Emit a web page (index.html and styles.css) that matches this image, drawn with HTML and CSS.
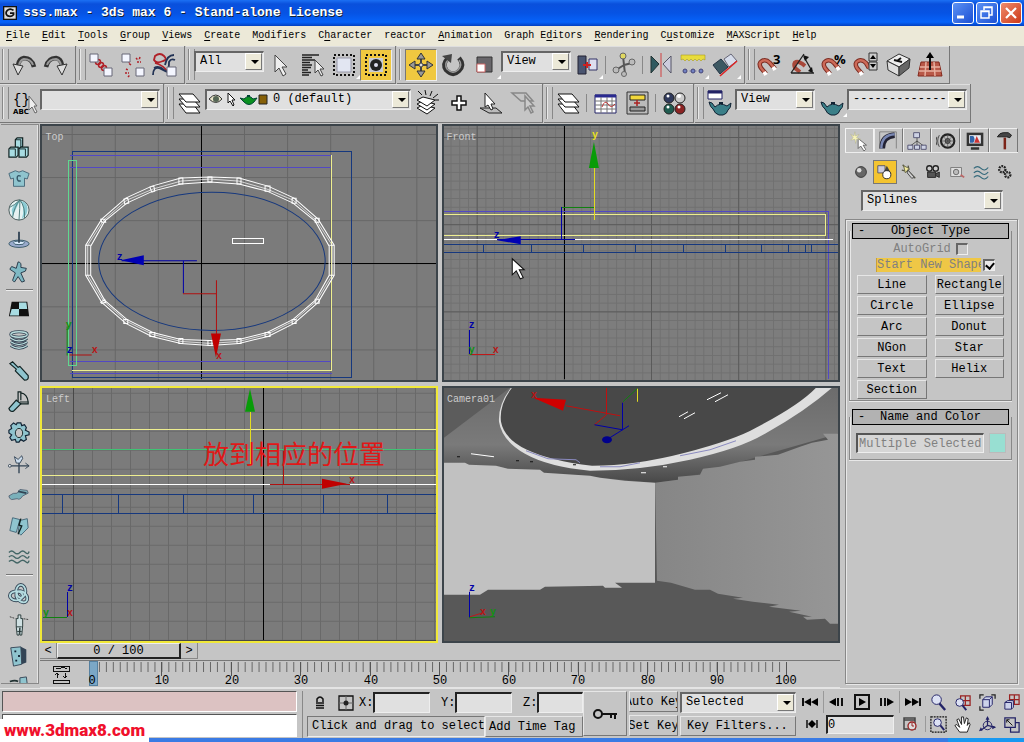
FILE: index.html
```
<!DOCTYPE html>
<html lang="en">
<head>
  <meta charset="UTF-8" />
  <meta name="viewport" content="width=device-width, initial-scale=1" />
  <title>sss.max - 3ds max 6 - Stand-alone License</title>
  <link rel="stylesheet" href="styles.css">
</head>
<body>

  <header class="titlebar">
    <svg class="app-icon" viewBox="0 0 16 16"><rect width="16" height="16" fill="#111"/><rect x="1.500" y="1.500" width="13" height="13" fill="#ddd"/><path d="M12 5Q8 2 5 5T5 11Q9 13 12 10V8H8" fill="none" stroke="#111" stroke-width="2"/></svg>
    <h1>sss.max - 3ds max 6 - Stand-alone License</h1>
    <div class="win-buttons">
      <button aria-label="Minimize"><svg viewBox="0 0 20 20"><path d="M4 14h7" stroke="#fff" stroke-width="3"/></svg></button>
      <button aria-label="Restore"><svg viewBox="0 0 20 20"><path d="M7 7V4h8v8h-3M7 4.500h8" fill="none" stroke="#fff" stroke-width="1.500"/><path d="M4 8h8v7H4zM4 8.500h8" fill="none" stroke="#fff" stroke-width="1.500"/></svg></button>
      <button class="close" aria-label="Close"><svg viewBox="0 0 20 20"><path d="M5 5l10 10M15 5L5 15" stroke="#fff" stroke-width="2.200"/></svg></button>
    </div>
  </header>

  <nav class="menubar">
    <a href="#"><u>F</u>ile</a><a href="#"><u>E</u>dit</a><a href="#"><u>T</u>ools</a><a href="#"><u>G</u>roup</a><a href="#"><u>V</u>iews</a><a href="#"><u>C</u>reate</a><a href="#">M<u>o</u>difiers</a><a href="#">C<u>h</u>aracter</a><a href="#">reactor</a><a href="#"><u>A</u>nimation</a><a href="#">Graph E<u>d</u>itors</a><a href="#"><u>R</u>endering</a><a href="#">C<u>u</u>stomize</a><a href="#"><u>M</u>AXScript</a><a href="#"><u>H</u>elp</a>
  </nav>

  <!-- main toolbar -->
  <div class="toolbar">
    <div class="group">
      <button class="tool" aria-label="Undo"><svg viewBox="0 0 28 28"><path d="M24 16Q22 7 14 7Q9 8 8 14" fill="none" stroke="#333" stroke-width="4.500"/><path d="M23 14Q21 8 14 8Q10 9 9 14" fill="none" stroke="#999" stroke-width="2"/><path d="M3 13l10 2-5 9z" fill="#ddd" stroke="#333"/></svg></button>
      <button class="tool" aria-label="Redo"><svg viewBox="0 0 28 28"><path d="M4 16Q6 7 14 7Q19 8 20 14" fill="none" stroke="#333" stroke-width="4.500"/><path d="M5 14Q7 8 14 8Q18 9 19 14" fill="none" stroke="#999" stroke-width="2"/><path d="M25 13l-10 2 5 9z" fill="#ddd" stroke="#333"/></svg></button>
    </div>
    <div class="group">
      <button class="tool" aria-label="Select and Link"><svg viewBox="0 0 28 28"><g fill="none" stroke="#b02028" stroke-width="1.500"><circle cx="11" cy="11" r="2.500"/><circle cx="14" cy="14" r="2.500"/><circle cx="17" cy="17" r="2.500"/></g><g fill="#f4f6ff" stroke="#667"><path d="M3 3h8v8H3zM17 17h8v8h-8z"/></g></svg></button>
      <button class="tool" aria-label="Unlink Selection"><svg viewBox="0 0 28 28"><path d="M12 14q-4-3 0-4M17 7l2 2M21 6l-1 3M18 11h4M7 18l2 1M6 22h4M9 26l2-2" fill="none" stroke="#b02028" stroke-width="1.500" stroke-dasharray="2 1"/><g fill="#f4f6ff" stroke="#667"><path d="M3 3h8v8H3zM17 17h8v8h-8z"/></g></svg></button>
      <button class="tool" aria-label="Bind to Space Warp"><svg viewBox="0 0 28 28"><path d="M4 5q5-4 9 0t-1 5q-7 3-9-1zM4 12q8 2 13 9" fill="none" stroke="#b02028" stroke-width="1.800"/><path d="M14 14q2-10 9-10M2 24q0-8 6-7l8 4M3 17q5-3 10 2t5-8q2-4 6-2" fill="none" stroke="#235" stroke-width="1.800"/><path d="M16 16h9v9h-9z" fill="#f4f6ff" stroke="#667"/></svg></button>
    </div>
    <div class="group">
      <span class="combo w70"><select aria-label="Selection Filter"><option>All</option></select></span>
      <button class="tool" aria-label="Select Object"><svg viewBox="0 0 28 28"><path d="M9 4v17l4-4 4 8 3-2-4-7h5z" fill="#eee" stroke="#444"/></svg></button>
      <button class="tool" aria-label="Select by Name"><svg viewBox="0 0 28 28"><path d="M4 4h17M4 6.500h10M4 9h13M4 11.500h8M4 14h10M4 16.500h9M4 19h6M4 21.500h9M4 24h7" stroke="#222" stroke-width="1.400"/><path d="M17 9v13l3-3 3 6 2-1-3-6h4z" fill="#eee" stroke="#444"/></svg></button>
      <button class="tool fly" aria-label="Rectangular Region"><svg viewBox="0 0 28 28"><path d="M4 4h20v20H4z" fill="none" stroke="#111" stroke-width="2" stroke-dasharray="2 2"/><path d="M7 7h14v14H7z" fill="#e2e6f2" stroke="#99a"/></svg></button>
      <button class="tool on" aria-label="Crossing"><svg viewBox="0 0 28 28"><path d="M4 4h20v20H4z" fill="none" stroke="#111" stroke-width="2" stroke-dasharray="2 2"/><path d="M7 7h14v14H7z" fill="#c8ccd6"/><circle cx="14" cy="14" r="6" fill="#222"/><circle cx="14" cy="14" r="2" fill="#dde"/></svg></button>
    </div>
    <div class="group">
      <button class="tool on" aria-label="Select and Move"><svg viewBox="0 0 28 28"><path d="M14 6v16M6 14h16" stroke="#444" stroke-width="2"/><path d="M14 2l4 6h-8zM14 26l4-6h-8zM2 14l6-4v8zM26 14l-6-4v8z" fill="#999" stroke="#333"/><circle cx="14" cy="14" r="2" fill="#ddd" stroke="#444"/></svg></button>
      <button class="tool" aria-label="Select and Rotate"><svg viewBox="0 0 28 28"><path d="M20 7Q26 14 20 20T7 19Q3 13 9 7" fill="none" stroke="#333" stroke-width="4.500"/><path d="M20 9Q24 14 19 19T8 18Q5 13 9 9" fill="none" stroke="#999" stroke-width="1.500"/><path d="M3 5l10-2-1 9z" fill="#444"/></svg></button>
      <button class="tool fly" aria-label="Select and Scale"><svg viewBox="0 0 28 28"><path d="M6 6h15v15H6z" fill="#68666a" stroke="#333"/><path d="M6 13h8v8H6z" fill="#fff" stroke="#c66"/></svg></button>
      <span class="combo w70"><select aria-label="Reference Coordinate System"><option>View</option></select></span>
      <button class="tool fly" aria-label="Use Pivot Point Center"><svg viewBox="0 0 28 28"><path d="M5 5h8v18H5z" fill="#4a5570" stroke="#223"/><path d="M16 8h8v11h-8z" fill="#dde" stroke="#336"/><path d="M10 14h8M14 11v6" stroke="#c22" stroke-width="2"/></svg></button>
      <i class="sep"></i>
      <button class="tool" aria-label="Select and Manipulate"><svg viewBox="0 0 28 28"><path d="M14 14l-1-9M14 14l8-2M14 14L6 19M14 14l1 9" stroke="#555" stroke-width="2"/><g stroke="#666" fill="#bbb"><circle cx="13" cy="5" r="3" fill="#e0d860"/><circle cx="22" cy="11" r="3"/><circle cx="6" cy="19" r="3"/><circle cx="14" cy="23" r="2.500"/></g></svg></button>
      <i class="sep"></i>
      <button class="tool" aria-label="Mirror"><svg viewBox="0 0 28 28"><path d="M4 5v17l8-9z" fill="#2f5a60" stroke="#233"/><path d="M24 5v17l-8-9z" fill="#ccd" stroke="#556"/><path d="M14 2v24" stroke="#d04040"/></svg></button>
      <button class="tool fly" aria-label="Align"><svg viewBox="0 0 28 28"><path d="M2 4h24v5l-2-1-2 2-2-2-2 2-2-2-2 2-2-2-2 2-2-2-2 2-2-2-2 1z" fill="#e8dc3c" stroke="#a99c20" stroke-width=".6"/><path d="M5 20h18" stroke="#99b" stroke-dasharray="3 2"/><g fill="#7080c0" stroke="#447"><circle cx="6" cy="20" r="2"/><circle cx="14" cy="20" r="2"/><circle cx="22" cy="20" r="2"/></g></svg></button>
      <button class="tool fly" aria-label="Layer Align"><svg viewBox="0 0 28 28"><path d="M2 14l8-6 7 8-8 7z" fill="#3c5862" stroke="#234"/><path d="M13 8l7-5 6 7-8 6z" fill="#d6dcea" stroke="#667"/><path d="M9 25L26 10" stroke="#d22" stroke-width="1.500"/></svg></button>
    </div>
    <div class="group">
      <button class="tool" aria-label="Snap Toggle"><svg viewBox="0 0 28 28"><path d="M10 23L5 17Q2 12 6 10t8 2l5 6" fill="none" stroke="#7c2c22" stroke-width="4.500"/><path d="M10 23L5 17Q2 12 6 10t8 2l5 6" fill="none" stroke="#cc6a58" stroke-width="2.500"/><path d="M8 21l2 3M17 16l2 3" stroke="#fff" stroke-width="4"/><text x="17" y="13" class="glyph">3</text></svg></button>
      <button class="tool" aria-label="Angle Snap"><svg viewBox="0 0 28 28"><path d="M12 21l-5-4Q5 12 8 11t9 4" fill="none" stroke="#a8483a" stroke-width="4"/><path d="M3 22h23M3 22L16 3M16 6l8 14" fill="none" stroke="#222" stroke-width="1.300"/><path d="M15 4l6 2-4 4zM25 22l-5-2 4-4z" fill="#111"/></svg></button>
      <button class="tool" aria-label="Percent Snap"><svg viewBox="0 0 28 28"><path d="M10 23L5 17Q2 12 6 10t8 2l5 6" fill="none" stroke="#7c2c22" stroke-width="4.500"/><path d="M10 23L5 17Q2 12 6 10t8 2l5 6" fill="none" stroke="#cc6a58" stroke-width="2.500"/><path d="M8 21l2 3M17 16l2 3" stroke="#fff" stroke-width="4"/><text x="14" y="13" class="glyph">%</text></svg></button>
      <button class="tool" aria-label="Spinner Snap"><svg viewBox="0 0 28 28"><path d="M10 23L5 17Q2 12 6 10t8 2l3 5" fill="none" stroke="#7c2c22" stroke-width="4.500"/><path d="M10 23L5 17Q2 12 6 10t8 2l3 5" fill="none" stroke="#cc6a58" stroke-width="2.500"/><path d="M8 21l2 3" stroke="#fff" stroke-width="4"/><path d="M17 2h8v8h-8zM17 11h8v8h-8z" fill="#ccc" stroke="#333"/><path d="M21 4l3 4h-6zM21 17l3-4h-6z"/></svg></button>
      <button class="tool" aria-label="Named Selection Sets"><svg viewBox="0 0 28 28"><path d="M3 10l12-7 11 5-11 8z" fill="#eee" stroke="#333"/><path d="M3 10l12 6v9L4 19z" fill="#ddd" stroke="#333"/><path d="M15 16l11-8-1 9-10 8z" fill="#666" stroke="#333"/><path d="M10 9l8 2M13 10l4-3" stroke="#111" stroke-width="2"/></svg></button>
      <button class="tool" aria-label="Grid Snap"><svg viewBox="0 0 28 28"><path d="M5 11h18l3 14H2z" fill="#b85848" stroke="#84281c"/><path d="M4 16h20M3 20h22M10 11l-1 14M18 11l1 14" stroke="#e8b0a0" stroke-width="1.500"/><path d="M14 19V6" stroke="#111" stroke-width="2"/><path d="M14 1l4 6h-8z"/></svg></button>
    </div>
  </div>

  <div class="toolbar second">
    <div class="group">
      <button class="tool" aria-label="Edit Named Selections"><svg viewBox="0 0 28 28"><text x="3" y="15" class="braces">{}</text><text x="3" y="25" class="tiny">ABC</text><path d="M19 7v14l3-3 3 6 2-1-3-6h3z" fill="#eee" stroke="#666"/></svg></button>
      <span class="combo w120"><select aria-label="Named Selection Sets"><option></option></select></span>
    </div>
    <div class="group">
      <button class="tool" aria-label="Layer Manager"><svg viewBox="0 0 28 28"><g fill="#fff" stroke="#111"><path d="M4 15h14l7 9H11z"/><path d="M4 10h14l7 8H11z"/><path d="M4 5h14l7 8H11z"/></g></svg></button>
      <span class="combo w206 layers">
        <select aria-label="Layer"><option>0 (default)</option></select>
        <svg viewBox="0 0 60 16"><path d="M1 8q7-8 13 0q-6 7-13 0z" fill="#e8e4c8" stroke="#333"/><circle cx="8" cy="8" r="3" fill="#565"/><path d="M20 2v10l2-2 3 5 1-1-2-5h3z" fill="#fff" stroke="#111"/><path d="M32 7l4 1q5-5 9 0l4-1-3 4q-5 5-10 0z" fill="#0a9020" stroke="#043"/><path d="M39 5h3" stroke="#043" stroke-width="2"/><path d="M51 4h8v9h-8z" fill="#866008" stroke="#222"/></svg>
      </span>
      <button class="tool" aria-label="Create New Layer"><svg viewBox="0 0 28 28"><g fill="#fff" stroke="#111"><path d="M4 19l6-3 12 3-8 6z"/><path d="M4 15l6-3 12 3-8 6z"/><path d="M4 11l6-3 12 3-8 6z"/></g><path d="M5 2l4 4M12 1l1 5M19 2l-2 5M25 5l-5 4M26 11h-4" stroke="#111"/></svg></button>
      <button class="tool" aria-label="Add Selection to Layer"><svg viewBox="0 0 28 28"><path d="M12 7h4v5h5v4h-5v5h-4v-5H7v-4h5z" fill="#fff" stroke="#111" stroke-width="1.500"/></svg></button>
      <button class="tool" aria-label="Select Objects in Layer"><svg viewBox="0 0 28 28"><path d="M3 19h16l6 5H12z" fill="#bbb" stroke="#222"/><path d="M8 4v14l3-2 3 5 2-1-2-5h4z" fill="#fff" stroke="#222"/></svg></button>
      <button class="tool" aria-label="Set Current Layer"><svg viewBox="0 0 28 28"><path d="M3 4h14l7 8H12z" fill="none" stroke="#888" stroke-width="1.500"/><path d="M16 7v14l3-3 3 6 2-1-3-6h4z" fill="#ccc" stroke="#888" stroke-width="1.500"/></svg></button>
    </div>
    <div class="group">
      <button class="tool" aria-label="Layers"><svg viewBox="0 0 28 28"><g fill="#fff" stroke="#111"><path d="M4 15h14l7 9H11z"/><path d="M4 10h14l7 8H11z"/><path d="M4 5h14l7 8H11z"/></g></svg></button>
      <i class="sep"></i>
      <button class="tool" aria-label="Curve Editor"><svg viewBox="0 0 28 28"><path d="M4 6h21v18H4z" fill="#fff" stroke="#226"/><path d="M4 7h21" stroke="#2a2a90" stroke-width="3"/><path d="M4 12h21M4 16h21M4 20h21M10 8v16M16 8v16M21 8v16" stroke="#777"/><path d="M11 18q3-8 6-3t7 0" fill="none" stroke="#b33"/></svg></button>
      <button class="tool" aria-label="Schematic View"><svg viewBox="0 0 28 28"><path d="M4 3h21v22H4z" fill="#bbb" stroke="#333"/><path d="M7 6h15v5H7z" fill="#f2d83c" stroke="#222"/><path d="M7 18h15v4H7z" fill="#999" stroke="#222"/><path d="M14 11v6M11 14h6" stroke="#a22" stroke-width="1.500"/></svg></button>
      <i class="sep"></i>
      <button class="tool" aria-label="Material Editor"><svg viewBox="0 0 28 28"><g stroke="#222"><circle cx="9" cy="9" r="5" fill="#303a5c"/><circle cx="20" cy="9" r="5" fill="#ccc"/><circle cx="9" cy="20" r="5" fill="#1f5c50"/><circle cx="20" cy="20" r="5" fill="#8c2424"/></g><g fill="#fff"><circle cx="8" cy="7" r="1.500"/><circle cx="19" cy="7" r="2"/><circle cx="8" cy="18" r="1.500"/><circle cx="19" cy="18" r="1.500"/></g></svg></button>
    </div>
    <div class="group">
      <button class="tool" aria-label="Render Scene"><svg viewBox="0 0 28 28"><path d="M3 2h14v8H3z" fill="#fff" stroke="#226"/><path d="M3 3h14" stroke="#226" stroke-width="3"/><path d="M4 13l3 1 3 4q5-5 12-1l4-3q0 5-3 7-1 4-5 5h-4q-4-1-6-6-3-2-4-7z" fill="#3b7f88" stroke="#123"/><path d="M14 14h4" stroke="#123" stroke-width="2"/></svg></button>
      <span class="combo w80"><select aria-label="Render Type"><option>View</option></select></span>
      <button class="tool fly" aria-label="Quick Render"><svg viewBox="0 0 28 28"><path d="M4 13l3 1 3 4q5-5 12-1l4-3q0 5-3 7-1 4-5 5h-4q-4-1-6-6-3-2-4-7z" fill="#3b7f88" stroke="#123"/><path d="M14 14h4" stroke="#123" stroke-width="2"/></svg></button>
      <span class="combo w120"><select aria-label="Preset"><option>-------------</option></select></span>
    </div>
  </div>

  <main class="workspace">
    <!-- reactor toolbar -->
    <aside class="reactor">
      <button aria-label="Rigid Body"><svg viewBox="0 0 24 24"><g fill="#a8dce2" stroke="#122" stroke-width="1.300"><path d="M8 3l2-2h6v9l-2 2H8z"/><path d="M1 13l2-2h8v9l-2 2H1z"/><path d="M12 13l2-2h8v9l-2 2h-8z"/></g><path d="M8 3h6v8M2 13h6v8M13 13h6v8" fill="none" stroke="#122"/></svg></button>
      <button aria-label="Cloth"><svg viewBox="0 0 24 24"><path d="M1 6l7-3q4 3 8 0l7 3-2 6-3-1v9H6v-9l-3 1z" fill="#8fc4ce" stroke="#467"/><path d="M14 9q-4-2-4 2t4 3" fill="none" stroke="#356" stroke-width="1.500"/></svg></button>
      <button aria-label="Soft Body"><svg viewBox="0 0 24 24"><circle cx="12" cy="12" r="11" fill="#e6f2f2" stroke="#455"/><path d="M14 2q5 8 1 20l5-5q3-8-1-13z" fill="#8ccbd4"/><path d="M4 12q3-8 9-10-5 10-8 17z" fill="#8ccbd4"/><path d="M2 9q5-2 11-8M5 20q2-12 8-19M12 23q1-14 1-22M18 21q1-12-5-20" fill="none" stroke="#477"/></svg></button>
      <button aria-label="Rope"><svg viewBox="0 0 24 24"><ellipse cx="12" cy="15" rx="11" ry="4" fill="#9ac" stroke="#356"/><ellipse cx="12" cy="14" rx="6" ry="2" fill="#def" stroke="#356"/><path d="M12 2v12" stroke="#345" stroke-width="2"/></svg></button>
      <button aria-label="Deforming Mesh"><svg viewBox="0 0 24 24"><path d="M11 1q4 0 3 6l6 1-1 3-5 2 4 9-3 1-4-6-4 6-2-2 3-8-6-4 2-3 5 2z" fill="#7fb9c4" stroke="#234"/></svg></button>
      <hr>
      <button aria-label="Plane"><svg viewBox="0 0 24 24"><path d="M4 4h17l2 16H1z" fill="#111"/><path d="M12 5h8l1 7h-9zM4 12h8v7H2z" fill="#a8dce2"/></svg></button>
      <button aria-label="Spring"><svg viewBox="0 0 24 24"><g fill="none" stroke="#345" stroke-width="3.200"><ellipse cx="12" cy="6" rx="9" ry="3"/><path d="M3 10q9 6 18 0M3 14q9 6 18 0M3 18q9 6 18 0"/></g><g fill="none" stroke="#bdd" stroke-width="1.400"><ellipse cx="12" cy="6" rx="9" ry="3"/><path d="M3 10q9 6 18 0M3 14q9 6 18 0M3 18q9 6 18 0"/></g></svg></button>
      <button aria-label="Linear Dashpot"><svg viewBox="0 0 24 24"><path d="M2 4l3-2 6 6 2-1 9 10q1 5-4 5L8 12l1-2z" fill="#8fc4ce" stroke="#122" stroke-width="1.300"/></svg></button>
      <button aria-label="Angular Dashpot"><svg viewBox="0 0 24 24"><path d="M1 19l8-9 5 4-8 8q-4 1-5-3z" fill="#8fc4ce" stroke="#122" stroke-width="1.300"/><path d="M11 11V1h3v9M13 12h9v2h-9M14 2q7 1 8 10" fill="none" stroke="#122" stroke-width="1.300"/></svg></button>
      <button aria-label="Motor"><svg viewBox="0 0 24 24"><path d="M10 1h4l1 3 3-1 2 3-1 3 4 2v3l-4 1 1 4-3 2-3-2-2 3h-3l-1-3-4 1-2-3 2-3-3-2v-3l3-2-1-3 3-3 3 2z" fill="#8fc4ce" stroke="#123" stroke-width="1.300"/><ellipse cx="12" cy="12" rx="4" ry="5" fill="#c5c5c5" stroke="#122"/></svg></button>
      <button aria-label="Wind"><svg viewBox="0 0 24 24"><path d="M1 14h22M12 9v13" stroke="#345" stroke-width="1.500"/><path d="M7 4l4 3 4-4 1 3-3 5H9z" fill="#cde" stroke="#345"/><circle cx="2" cy="14" r="1.500" fill="#fff" stroke="#345"/><path d="M19 11l4 3-4 3" fill="none" stroke="#345"/></svg></button>
      <button aria-label="Toy Car"><svg viewBox="0 0 24 24"><path d="M1 13q5-4 9-3l3-4 8 1 1 3-6 3q-3 5-6 3l-6 1q-3-1-3-4z" fill="#7ab0ba" stroke="#567"/><path d="M11 8l9 2" stroke="#345" stroke-width="2"/></svg></button>
      <button aria-label="Fracture"><svg viewBox="0 0 24 24"><path d="M5 3l8 2-4 14-7-2zM13 6l8-2 1 10-8 8-3-3z" fill="#8fc4ce" stroke="#467"/><path d="M14 4l-2 7 3 1-4 9" fill="none" stroke="#122" stroke-width="1.500"/></svg></button>
      <button aria-label="Water"><svg viewBox="0 0 24 24"><path d="M1 7q3-3 6 0t6 0 6 0 4-1M1 12q3-3 6 0t6 0 6 0 4-1M1 17q3-3 6 0t6 0 6 0 4-1" fill="none" stroke="#466" stroke-width="1.500"/></svg></button>
      <hr>
      <button aria-label="Constraint Solver"><svg viewBox="0 0 24 24"><g fill="none" stroke="#345" stroke-width="4"><ellipse cx="9" cy="14" rx="7" ry="5"/><ellipse cx="14" cy="9" rx="5" ry="7"/><ellipse cx="15" cy="15" rx="7" ry="5" transform="rotate(45 15 15)"/></g><g fill="none" stroke="#b5dce0" stroke-width="2"><ellipse cx="9" cy="14" rx="7" ry="5"/><ellipse cx="14" cy="9" rx="5" ry="7"/><ellipse cx="15" cy="15" rx="7" ry="5" transform="rotate(45 15 15)"/></g></svg></button>
      <button aria-label="Rag Doll"><svg viewBox="0 0 24 24"><path d="M2 3l6 2M22 6l-6-1" stroke="#333" stroke-dasharray="2 1"/><path d="M11 1h3v4h2v8l-1 10h-2v-8l-1 8h-2l-1-9V5h2z" fill="#cfe0e2" stroke="#233"/><path d="M9 14h6M10 19h5" stroke="#233"/></svg></button>
      <button aria-label="Hinge"><svg viewBox="0 0 24 24"><path d="M3 3l11-1 1 19-9 2z" fill="#8fc4ce" stroke="#345"/><path d="M14 2l6 3v14l-5 2z" fill="#345"/><path d="M7 7h2M11 12h2M8 17h2" stroke="#123" stroke-width="2"/></svg></button>
      <button aria-label="Point-Point"><svg viewBox="0 0 24 24"><path d="M13 2l7-1 1 8h-8z" fill="#8fc4ce" stroke="#345"/><path d="M2 6q6-2 9 0" fill="none" stroke="#233" stroke-width="2"/></svg></button>
    </aside>

    <section class="stage">
      <div class="viewports">
        <!-- Top -->
        <svg class="view" viewBox="42 126 394 253" preserveAspectRatio="xMidYMid slice">
          <defs>
            <pattern id="gridTop" x="72" y="134" width="43" height="43" patternUnits="userSpaceOnUse"><path d="M.5 0v43M0 .5h43" stroke="#666" fill="none"/></pattern>
          </defs>
          <rect x="0" y="0" width="900" height="742" fill="#7b7b7b"/>
          <rect x="0" y="0" width="900" height="742" fill="url(#gridTop)"/>
          <g fill="none" shape-rendering="crispEdges">
            <path d="M201.500 126v253M42 263.500h394" stroke="#000"/>
            <path d="M72.500 151.500h279v226h-279z" stroke="#16387e"/>
            <path d="M70 155.500h262M70 167.500h262M70 361.500h262M70 373.500h262" stroke="#5248c4"/>
            <path d="M331.500 155v216M72 370.500h260" stroke="#eeee90"/>
            <path d="M68.500 160.500h8v205h-8z" stroke="#5fd890"/>
            <path d="M232.500 238.500h31v5h-31z" stroke="#fff"/>
          </g>
          <ellipse cx="212" cy="261" rx="113" ry="69" fill="none" stroke="#16387e"/>
          <g fill="none" stroke="#fff">
            <path d="M210 177L181 178 152 186 126 198 102 219 86 245V275L102 302 126 323 152 336 181 343 210 345 239 343 268 336 294 323 318 302 334 275V245L318 219 294 198 268 186 239 178z"/>
            <path d="M210 182L181 184 153 191 127 203 105 221 91 246V275L105 300 127 319 153 332 181 339 210 340 239 339 267 332 293 319 315 300 329 275V246L315 221 293 203 267 191 239 184z"/>
            <path d="M210 179L181 181 153 189 127 200 104 220 88 245V275L104 301 127 321 153 334 181 341 210 343 239 341 267 334 293 321 316 301 332 275V245L316 220 293 200 267 189 239 181z" stroke-width=".7"/>
            <path d="M208 177h4v5h-4zM179 178h4v6h-4zM150 187l4-1 1 5-3 1zM124 199l4-1 1 5-4 1zM101 219l4 0 1 3-4 0zM86 245h5M86 275h5M101 302l4-3 1 3-4 1zM124 319l4 0 0 4-4 0zM150 332h5v4h-5zM179 338h4v5h-4zM208 340h4v5h-4zM237 338h4v5h-4zM265 332h5v4h-5zM292 319h4v4h-4zM315 299h4v4h-4zM329 275h5M329 245h5M315 218h4v4h-4zM292 198h4v5h-4zM265 186h5v5h-5zM237 178h4v6h-4z"/>
          </g>
          <path d="M122 260.500h75M183.500 261v32" stroke="#0000a8"/><path d="M121 260l23-5v10z" fill="#0000b4"/>
          <path d="M183 293.500h33M216.500 280v60M70 354.500h22" stroke="#b01010"/><path d="M211 333h10l-5 24z" fill="#c00000"/>
          <path d="M67.500 326v29" stroke="#109010"/>
          <text class="axis z" x="117" y="260">z</text><text class="axis x" x="216" y="359">x</text>
          <text class="axis y" x="66" y="328">y</text><text class="axis z" x="67" y="353">z</text><text class="axis x" x="92" y="353">x</text>
          <text class="label" x="46" y="140">Top</text>
        </svg>

        <!-- Front -->
        <svg class="view" viewBox="444 126 394 253" preserveAspectRatio="xMidYMid slice">
          <defs>
            <pattern id="fine" x="564" y="137" width="8.700" height="8.700" patternUnits="userSpaceOnUse"><path d="M.5 0v9M0 .5h9" stroke="#707070" fill="none"/></pattern>
            <pattern id="major" x="477" y="137" width="87" height="87" patternUnits="userSpaceOnUse"><path d="M.5 0v87M0 .5h87" stroke="#5a5a5a" fill="none"/></pattern>
          </defs>
          <rect x="0" y="0" width="900" height="742" fill="#7d7d7d"/>
          <rect x="0" y="0" width="900" height="742" fill="url(#fine)"/>
          <rect x="0" y="0" width="900" height="742" fill="url(#major)"/>
          <g fill="none" shape-rendering="crispEdges">
            <path d="M564.500 126v253" stroke="#000"/>
            <path d="M444 211.500h384V379" stroke="#5248c4"/>
            <path d="M444 214.500h381v21H444" stroke="#eeee90"/>
            <path d="M444 239.500h389" stroke="#fff"/>
            <path d="M444 244.500h394M444 252.500h394M483.500 245v7M531.500 245v7M583.500 245v7M635.500 245v7M683.500 245v7M725.500 245v7M761.500 245v7M788.500 245v7M805.500 245v7M811.500 245v7" stroke="#16387e"/>
            <path d="M561.500 207v32M497 239.500h78M469.500 330v24" stroke="#0000a8"/>
            <path d="M562 207.500h33" stroke="#108010"/>
            <path d="M594.500 167v53" stroke="#e4dc20"/>
            <path d="M470 354.500h25" stroke="#c01818"/>
          </g>
          <path d="M594 142l5 26h-10z" fill="#089c08"/><path d="M497 240l24-4v8z" fill="#0000b4"/>
          <text class="axis yellow" x="592" y="138">y</text><text class="axis z" x="494" y="238">z</text>
          <text class="axis z" x="469" y="328">z</text><text class="axis y" x="469" y="353">y</text><text class="axis x" x="493" y="353">x</text>
          <path d="M512.500 258.500v16l4-4 4 8 3-1-4-8h5z" fill="#fff" stroke="#111"/>
          <text class="label" x="447" y="140">Front</text>
        </svg>

        <!-- Left, the active view -->
        <svg class="view active" viewBox="42 387 394 254" preserveAspectRatio="xMidYMid slice">
          <defs>
            <pattern id="gridLeft" x="73" y="392" width="19" height="19" patternUnits="userSpaceOnUse"><path d="M.5 0v19M0 .5h19" stroke="#696969" fill="none"/></pattern>
          </defs>
          <rect x="0" y="0" width="900" height="742" fill="#7b7b7b"/>
          <rect x="0" y="0" width="900" height="742" fill="url(#gridLeft)"/>
          <g fill="none" shape-rendering="crispEdges">
            <path d="M263.500 387v254" stroke="#000"/><path d="M73.500 387v254M42 639.500h394" stroke="#484848"/>
            <path d="M42 428.500h394M42 474.500h394" stroke="#eeee90"/>
            <path d="M42 448.500h394" stroke="#3fc474"/>
            <path d="M42 483.500h394" stroke="#fff"/>
            <path d="M42 493.500h394M42 512.500h394M62.500 494v18M118.500 494v18M183.500 494v18M253.500 494v18M323.500 494v18M387.500 494v18" stroke="#16387e"/>
            <path d="M250.500 411v54" stroke="#e4dc20"/>
            <path d="M270 483.500h80M283.500 450v33" stroke="#b01010"/>
            <path d="M67.500 591v25" stroke="#0000a8"/><path d="M43 616.500h24" stroke="#108010"/>
          </g>
          <path d="M250 388l5 23h-10z" fill="#089c08"/><path d="M347 483l-25 5v-10z" fill="#c00000"/>
          <text class="axis x" x="349" y="482">x</text>
          <text class="axis z" x="67" y="590">z</text><text class="axis y" x="43" y="615">y</text><text class="axis x" x="67" y="615">x</text>
          <text class="label" x="46" y="401">Left</text>
          <text class="caption" x="203" y="463">放到相应的位置</text>
        </svg>

        <!-- Camera01 -->
        <svg class="view" viewBox="444 387 394 254" preserveAspectRatio="xMidYMid slice">
          <defs>
            <linearGradient id="ceil" x1="0" y1="0" x2="0" y2="1"><stop offset="0" stop-color="#6c6c6c"/><stop offset=".6" stop-color="#7a7a7a"/><stop offset="1" stop-color="#484848"/></linearGradient>
            <linearGradient id="wall" x1="0" y1="0" x2="1" y2="0"><stop offset="0" stop-color="#868686"/><stop offset="1" stop-color="#969696"/></linearGradient>
          </defs>
          <rect x="0" y="0" width="900" height="742" fill="#585858"/>
          <path d="M444 387h394v46l-160 46-23 3-211-20z" fill="url(#ceil)"/>
          <path d="M444 387h66l-66 50z" fill="#5c5c5c"/>
          <path d="M444 462h21l4 2 27 1 12 3 32 1 4 3 46 3 10 2 25 3 30 2v100h-40l7 5h-17l-2-2-58 1-5 3h-52l-8 5h-36z" fill="#c1c1c1"/>
          <path d="M655 482l23-3 0-3 22-2 3-6 17-2 20-5 15-2 0-3 23-2 22-8 12-4 16-3-5-6h15v190h-8l-5-5-18 1-4-3 9 0-23-5 12-1-32-4 10-2-26-3-20-3 10-1-25-4-8-4h-15l-24-7-14-2z" fill="url(#wall)"/>
          <path d="M511 387Q498 404 499 421 502 440 525 453T590 470Q640 470 690 459T765 433Q806 410 832 387z" fill="#dedede"/>
          <path d="M512 387Q499 404 501 421 504 438 527 449T592 465Q635 465 685 452T756 427Q800 404 816 387z" fill="#484848"/>
          <path d="M526 450l22 8 28 1 4 3M600 466h20l20-4M680 455l30-6 26-9" fill="none" stroke="#8a8ac0"/>
          <path d="M707 399l14-7M715 401l13-7M679 416l9-5M684 418l11-6M471 453l23 3M641 472h5M663 466h4" stroke="#fff"/>
          <path d="M457 456h3M516 460h3M530 461h3M573 464h3" stroke="#111"/>
          <path d="M606.500 387v27l-12 10M566 405l54 10" fill="none" stroke="#c01010"/><path d="M533 397l33 2-3 11z" fill="#d00000"/>
          <path d="M622.500 402v27l-28-5M629 425l-24 15M469.500 591v26" fill="none" stroke="#0000a8"/><ellipse cx="607" cy="439" rx="5" ry="3.500" fill="#00008c"/>
          <path d="M623 401l14-13M469 617l26-1" stroke="#108010"/><path d="M637.500 388v13" stroke="#e4dc20"/>
          <path d="M470 616l13-4" stroke="#c01818"/>
          <text class="axis x" x="531" y="397">x</text><text class="axis z" x="469" y="590">z</text><text class="axis x" x="480" y="614">x</text><text class="axis y" x="490" y="614">y</text>
          <text class="label" x="447" y="401">Camera01</text>
        </svg>
      </div>

      <div class="timeslider">
        <button aria-label="Previous Frame">&lt;</button><button class="thumb">0 / 100</button><button aria-label="Next Frame">&gt;</button>
      </div>
      <div class="trackbar">
        <svg viewBox="40 662 800 25" preserveAspectRatio="xMinYMid meet">
          <defs><pattern id="ticks" x="92" y="662" width="6.940" height="10" patternUnits="userSpaceOnUse"><path d="M.5 0v10" stroke="#666"/></pattern></defs>
          <path d="M53 667h16v5H53zM53 681h16v3H53zM56 669l3 1 4-2 4 2" fill="none" stroke="#111"/><path d="M57 679v-5M55 676l2-2 2 2M65 674v5M63 677l2 2 2-2" fill="none" stroke="#111"/>
          <rect x="92" y="663" width="696" height="10" fill="url(#ticks)"/>
          <path d="M161.500 663v14M231.500 663v14M300.500 663v14M370.500 663v14M439.500 663v14M508.500 663v14M578.500 663v14M647.500 663v14M717.500 663v14M786.500 663v14" stroke="#555"/>
          <path d="M89 662h8v24h-8z" fill="#7ba7c6" stroke="#5580a0"/>
          <g class="nums"><text x="92" y="685">0</text><text x="162" y="685">10</text><text x="232" y="685">20</text><text x="301" y="685">30</text><text x="371" y="685">40</text><text x="440" y="685">50</text><text x="509" y="685">60</text><text x="578" y="685">70</text><text x="648" y="685">80</text><text x="717" y="685">90</text><text x="786" y="685">100</text></g>
        </svg>
      </div>
    </section>

    <aside class="panel">
      <div class="tabs">
        <button class="current" aria-label="Create"><svg viewBox="0 0 24 24"><path d="M11 9v12l3-3 4 6 2-2-3-5h4z" fill="#fff" stroke="#555"/><path d="M7 1l1 5 4-2-3 4 5 2-5 0-1 5-1-5-5 1 3-3-3-4 4 2z" fill="#f8f4b8" stroke="#aa8" stroke-width=".5"/></svg></button>
        <button aria-label="Modify"><svg viewBox="0 0 24 24"><path d="M5 21Q5 6 20 5" fill="none" stroke="#223" stroke-width="7"/><path d="M4 21Q4 5 20 4" fill="none" stroke="#7a88b4" stroke-width="3"/><path d="M2 1h20v20M2 1v20" fill="none" stroke="#666" stroke-width=".8"/></svg></button>
        <button aria-label="Hierarchy"><svg viewBox="0 0 24 24"><path d="M12 8v5M4 18l8-6 8 6M12 12v5" fill="none" stroke="#444"/><path d="M8 2h7v6H8zM1 17h6v5H1zM9 17h6v5H9zM17 17h6v5h-6z" fill="#cdd2e4" stroke="#446"/></svg></button>
        <button aria-label="Motion"><svg viewBox="0 0 24 24"><circle cx="14" cy="12" r="8" fill="#bbb" stroke="#222" stroke-width="2.500"/><circle cx="14" cy="12" r="3" fill="#777" stroke="#222"/><path d="M14 4v16M6 12h16M8 6l12 12M20 6L8 18" stroke="#444" stroke-width=".7"/><path d="M4 5q-4 7 0 14M1 7q-2 5 0 10" fill="none" stroke="#333"/></svg></button>
        <button aria-label="Display"><svg viewBox="0 0 24 24"><path d="M2 2h20v16H2z" fill="#333"/><path d="M5 5h14v10H5z" fill="#e8ecf4"/><path d="M6 6h4q3 4 0 8H6z" fill="#36a"/><path d="M14 6l4 8h-7z" fill="#c33"/><path d="M7 21h10" stroke="#333" stroke-width="3"/></svg></button>
        <button aria-label="Utilities"><svg viewBox="0 0 24 24"><path d="M4 7q3-5 7-5h6l4 3-2 3-4-1H9z" fill="#444" stroke="#111"/><path d="M13 8v14" stroke="#7c2418" stroke-width="3"/></svg></button>
      </div>
      <div class="cats">
        <button aria-label="Geometry"><svg viewBox="0 0 20 20"><circle cx="10" cy="10" r="6" fill="#666" stroke="#333"/><circle cx="8" cy="8" r="2.500" fill="#ddd"/></svg></button>
        <button class="on" aria-label="Shapes"><svg viewBox="0 0 20 20"><path d="M2 3h8v8H2z" fill="#ccd" stroke="#556"/><path d="M12 3l5 9H8z" fill="#444"/><circle cx="12" cy="13" r="4.500" fill="#fff" stroke="#222"/></svg></button>
        <button aria-label="Lights"><svg viewBox="0 0 20 20"><path d="M3 2l5 6 9 9M2 8l5 1M9 3l1 5" stroke="#554" stroke-width="1.500"/><path d="M4 3l6 3-4 5z" fill="#f4eca0" stroke="#664"/><path d="M9 8l7 8-3 1-5-6z" fill="#ccc" stroke="#444"/></svg></button>
        <button aria-label="Cameras"><svg viewBox="0 0 20 20"><circle cx="6" cy="6" r="3" fill="#ccc" stroke="#222" stroke-width="1.500"/><circle cx="13" cy="6" r="3" fill="#ccc" stroke="#222" stroke-width="1.500"/><path d="M4 10h9v6H4zM13 12l4-2v6l-4-2" fill="#555" stroke="#222"/></svg></button>
        <button aria-label="Helpers"><svg viewBox="0 0 20 20"><path d="M3 5h12v10H3z" fill="#ddd" stroke="#777"/><circle cx="9" cy="10" r="3" fill="#bbb" stroke="#666"/><path d="M14 13l4 3" stroke="#b66" stroke-width="2"/></svg></button>
        <button aria-label="Space Warps"><svg viewBox="0 0 20 20"><path d="M2 6q4-4 8 0t8-1M2 11q4-4 8 0t8-1M2 16q4-4 8 0t8-1" fill="none" stroke="#356a7c" stroke-width="1.300"/></svg></button>
        <button aria-label="Systems"><svg viewBox="0 0 20 20"><circle cx="7" cy="7" r="3.500" fill="#bbb" stroke="#222" stroke-width="2.500" stroke-dasharray="2 1"/><circle cx="13" cy="13" r="3" fill="#bbb" stroke="#222" stroke-width="2.500" stroke-dasharray="2 1"/></svg></button>
      </div>
      <span class="combo kind"><select aria-label="Category"><option>Splines</option></select></span>

      <div class="rollouts">
        <section class="rollout">
          <h2><span>-</span>Object Type</h2>
          <div class="rollout-body">
            <div class="check"><label for="autogrid" class="dim">AutoGrid</label><input type="checkbox" id="autogrid" disabled></div>
            <div class="check start"><label for="newshape" class="dim hot">Start New Shape</label><input type="checkbox" id="newshape" checked></div>
            <div class="types">
              <button>Line</button><button>Rectangle</button>
              <button>Circle</button><button>Ellipse</button>
              <button>Arc</button><button>Donut</button>
              <button>NGon</button><button>Star</button>
              <button>Text</button><button>Helix</button>
              <button>Section</button>
            </div>
          </div>
        </section>
        <section class="rollout">
          <h2><span>-</span>Name and Color</h2>
          <div class="rollout-body name-row">
            <input type="text" value="Multiple Selected" aria-label="Object name" disabled>
            <button class="swatch" aria-label="Object color"></button>
          </div>
        </section>
      </div>
    </aside>
  </main>

  <footer class="status">
    <div class="listener"><div class="macro"></div><div class="script"></div></div>

    <div class="prompt">
      <div class="coords">
        <button class="mini" aria-label="Selection Lock"><svg viewBox="0 0 16 16"><path d="M5 7V4q3-4 6 0v3" fill="none" stroke="#111" stroke-width="1.500"/><path d="M4 8h8M4 10.500h8M4 13h8" stroke="#111" stroke-width="1.500"/></svg></button>
        <button class="mini" aria-label="Absolute Mode"><svg viewBox="0 0 16 16"><path d="M1 1h14v14H1z" fill="none" stroke="#111" stroke-width="1.300"/><path d="M8 1v14M1 8h14" stroke="#666"/><circle cx="8" cy="8" r="2.500" fill="#222"/></svg></button>
        <label for="cx">X:</label><input id="cx" type="text">
        <label for="cy">Y:</label><input id="cy" type="text">
        <label for="cz">Z:</label><input id="cz" type="text">
      </div>
      <div class="messages"><output>Click and drag to select</output><button>Add Time Tag</button></div>
    </div>

    <button class="key" aria-label="Set Keys"><svg viewBox="0 0 26 14"><circle cx="6" cy="7" r="4" fill="none" stroke="#111" stroke-width="2"/><path d="M10 7h15M19 7v4M23 7v5" stroke="#111" stroke-width="2"/></svg></button>
    <div class="keymodes"><button>Auto Key</button><button>Set Key</button></div>
    <div class="keysets"><span class="combo"><select aria-label="Key Set"><option>Selected</option></select></span><button>Key Filters...</button></div>

    <div class="playback">
      <div class="play-row">
        <button aria-label="Go to Start"><svg viewBox="0 0 20 16"><path d="M3 4v8" stroke="#111" stroke-width="2"/><path d="M11 4v8L4 8zM18 4v8l-7-4z"/></svg></button>
        <button aria-label="Previous"><svg viewBox="0 0 20 16"><path d="M10 4v8L3 8z"/><path d="M12 4v8M16 4v8" stroke="#111" stroke-width="2"/></svg></button>
        <button aria-label="Play"><svg viewBox="0 0 20 16"><path d="M3 1h14v14H3z" fill="none" stroke="#111" stroke-width="2"/><path d="M7 4v8l7-4z"/></svg></button>
        <button aria-label="Next"><svg viewBox="0 0 20 16"><path d="M10 4v8l7-4z"/><path d="M8 4v8M4 4v8" stroke="#111" stroke-width="2"/></svg></button>
        <button aria-label="Go to End"><svg viewBox="0 0 20 16"><path d="M17 4v8" stroke="#111" stroke-width="2"/><path d="M9 4v8l7-4zM2 4v8l7-4z"/></svg></button>
      </div>
      <div class="frame-row">
        <button aria-label="Key Mode"><svg viewBox="0 0 20 16"><path d="M5 4v8M15 4v8" stroke="#111" stroke-width="1.500"/><path d="M10 4v8L6 8zM10 4v8l4-4z"/></svg></button>
        <input type="text" value="0" aria-label="Current frame">
        <button aria-label="Time Configuration"><svg viewBox="0 0 20 16"><path d="M4 2h11v11H4zM4 4h11" fill="none" stroke="#444" stroke-width="1.500"/><circle cx="12" cy="10" r="4" fill="#ddd" stroke="#922" stroke-width="1.300"/><path d="M12 7v3h2" fill="none" stroke="#922"/></svg></button>
      </div>
    </div>

    <div class="navs">
      <button aria-label="Zoom"><svg viewBox="0 0 20 20"><circle cx="8" cy="7" r="5" fill="#dde2f4" stroke="#226"/><path d="M11 11l6 7" stroke="#226" stroke-width="2.500"/></svg></button>
      <button aria-label="Zoom All"><svg viewBox="0 0 20 20"><path d="M8 3h10v10H8zM13 3v10M8 8h10" fill="none" stroke="#922" stroke-width="1.300"/><circle cx="7" cy="10" r="4" fill="#dde2f4" stroke="#226"/><path d="M10 13l4 5" stroke="#226" stroke-width="2"/></svg></button>
      <button aria-label="Zoom Extents"><svg viewBox="0 0 20 20"><path d="M2 6V2h4M14 2h4v4M2 14v4h4" fill="none" stroke="#222" stroke-width="1.300"/><path d="M5 7l3-3h7v8l-3 3H5zM5 7h7v8M12 7l3-3" fill="#ccd2ea" stroke="#226"/></svg></button>
      <button aria-label="Zoom Extents All"><svg viewBox="0 0 20 20"><path d="M8 2h10v10H8zM13 2v10M8 7h10" fill="none" stroke="#922" stroke-width="1.300"/><path d="M3 10l3-2h6v7l-2 2H3zM3 10h7v7" fill="#ccd2ea" stroke="#226"/></svg></button>
      <button aria-label="Region Zoom"><svg viewBox="0 0 20 20"><path d="M2 2h16v16H2z" fill="none" stroke="#111" stroke-width="1.300" stroke-dasharray="2 1"/><circle cx="9" cy="8" r="4" fill="#dde2f4" stroke="#226"/><path d="M12 11l4 5" stroke="#226" stroke-width="2"/></svg></button>
      <button aria-label="Pan"><svg viewBox="0 0 20 20"><path d="M7 18l-5-7 2-1 3 3-3-8 2-1 3 6V2h2l1 7 2-6 2 1-1 7 2-3 1 2-3 8z" fill="#fff" stroke="#222"/></svg></button>
      <button aria-label="Arc Rotate"><svg viewBox="0 0 20 20"><path d="M10 11V3M10 11l-7 5M10 11l8 2" stroke="#226" stroke-width="1.300"/><circle cx="10" cy="11" r="4.500" fill="none" stroke="#226"/><path d="M10 1l2 4H8zM1 17l2-4 2 3zM19 13l-4 2v-4z" fill="#226"/></svg></button>
      <button aria-label="Min/Max Toggle"><svg viewBox="0 0 20 20"><path d="M3 3h11v10H3zM14 8h4v10h-9v-5" fill="none" stroke="#226" stroke-width="1.300"/><path d="M5 5l6 6M5 8V5h3" fill="none" stroke="#111"/></svg></button>
    </div>
    <div class="watermark">www.3dmax8.com</div>
  </footer>
  <div class="taskbar"><span></span></div>

</body>
</html>
```

FILE: styles.css
```
* { box-sizing: border-box; }
html, body { height: 100%; }
body {
  margin: 0; background: #c5c5c5; color: #000; overflow: hidden;
  display: flex; flex-direction: column;
  font-family: "Liberation Mono", monospace; font-size: 12px; line-height: 14px;
}
button, input, select { font: inherit; color: inherit; margin: 0; padding: 0; border-radius: 0; }
button { background: none; border: 0; white-space: nowrap; }
svg { display: block; }

/* title + menu */
.titlebar {
  flex: none; height: 26px; display: flex; align-items: center; padding: 0 2px;
  background: linear-gradient(#1c70f4 0, #0a50dc 4px, #0653e4 50%, #0663fa 85%, #0340c0 100%);
}
.app-icon { width: 16px; height: 14px; }
.titlebar h1 { flex: 1; margin: 0 0 0 5px; color: #fff; font-size: 13px; line-height: 16px; text-shadow: 1px 1px #123; }
.win-buttons { display: flex; gap: 2px; }
.win-buttons button { width: 22px; height: 22px; border: 1px solid #fff; border-radius: 3px; background: linear-gradient(135deg, #5c92f4, #1b50d4); }
.win-buttons .close { background: linear-gradient(135deg, #f08c6c, #cc3818); }
.menubar { flex: none; height: 20px; display: flex; gap: 12px; padding: 0 6px; background: #ece9d8; font-size: 10px; line-height: 20px; white-space: nowrap; }
.menubar a { color: #000; text-decoration: none; }
.menubar u { text-underline-offset: 2px; }

/* toolbars */
.toolbar { flex: none; display: flex; height: 38px; gap: 1px; }
.toolbar.second { height: 39px; }
.group {
  position: relative; display: flex; align-items: center; flex: none;
  padding: 0 3px 0 8px; border: 1px solid #777; border-width: 0 1px 1px 0;
  box-shadow: inset 0 1px #dedede;
}
.group::before { content: ""; position: absolute; left: 2px; top: 3px; bottom: 3px; width: 5px; border: 1px solid #888; border-width: 0 1px; box-shadow: inset 1px 0 #e8e8e8; }
.tool { position: relative; width: 32px; height: 32px; display: grid; place-items: center; }
.tool svg { width: 28px; height: 28px; overflow: visible; }
.tool.on { background: #f0c840; border: 1px solid #777; border-right-color: #eee; border-bottom-color: #eee; }
.tool.fly::after { content: ""; position: absolute; right: 0; bottom: 2px; border: 2px solid transparent; border-right-color: #fff; border-bottom-color: #fff; }
.sep { width: 1px; height: 18px; margin: 0 2px; background: #888; }
.glyph { font: bold 13px "Open Sans", sans-serif; }
.braces { font: 14px "Liberation Mono", monospace; }
.tiny { font: bold 7px "DejaVu Sans", sans-serif; }

.combo { position: relative; display: block; height: 21px; }
.combo select {
  display: block; appearance: none; width: 100%; height: 100%; padding: 0 18px 2px 4px;
  background: #e0e0e0; border: 2px solid #666; border-right: 1px solid #eee; border-bottom: 1px solid #eee; border-radius: 0;
}
.combo::before {
  content: ""; position: absolute; right: 2px; top: 2px; bottom: 2px; width: 15px; pointer-events: none;
  background: #ece9d8; border: 1px solid #fff; border-right-color: #777; border-bottom-color: #777;
}
.combo::after { content: ""; position: absolute; right: 5px; top: 9px; border: 4px solid transparent; border-top-color: #000; border-bottom: 0; pointer-events: none; }
.group .combo { align-self: flex-start; margin-top: 5px; }
.w70 { width: 70px; }
.w80 { width: 80px; }
.w120 { width: 120px; }
.w206 { width: 206px; }
.layers select { padding-left: 66px; }
.layers svg { position: absolute; left: 3px; top: 2px; width: 60px; height: 16px; }

/* workspace */
.workspace { flex: 1; min-height: 0; display: grid; grid-template-columns: 40px 1fr 184px; padding-top: 1px; }
.reactor { overflow: hidden; margin: 0 1px 4px 1px; padding: 7px 5px 0; border: 1px solid #888; border-width: 1px 1px 1px 0; box-shadow: inset -1px 0 #e4e4e4; }
.reactor button { width: 26px; height: 31px; display: grid; place-items: center; }
.reactor svg { width: 22px; height: 22px; }
.reactor hr { margin: 2px 0; border: 0; height: 2px; border-top: 1px solid #777; border-bottom: 1px solid #eee; }

.stage { min-width: 0; min-height: 0; display: flex; flex-direction: column; }
.viewports { flex: 1; min-height: 0; display: grid; grid-template: 1fr 1fr / 1fr 1fr; gap: 4px; }
.view { width: 100%; height: 100%; min-height: 0; border: 2px solid #3c444a; overflow: hidden; }
.view.active { border-color: #f0e838; }
.label { font: 10px "Liberation Mono", monospace; fill: #ccc; }
.axis { font: bold 10px "Liberation Mono", monospace; }
.axis.x { fill: #b81414; }
.axis.y { fill: #109010; }
.axis.z { fill: #0000a8; }
.axis.yellow { fill: #e8e020; }
.caption { font: 26px "Noto Sans CJK SC", sans-serif; fill: #e01818; }

.timeslider { flex: none; height: 18px; display: flex; border-bottom: 1px solid #777; }
.timeslider button { width: 17px; height: 16px; border: 1px solid #888; border-width: 0 1px 1px 0; line-height: 14px; }
.timeslider .thumb { width: 124px; border: 1px solid #eee; border-right: 2px solid #222; border-bottom: 2px solid #222; }
.trackbar { flex: none; height: 27px; border-bottom: 1px solid #e4e4e4; }
.trackbar svg { width: 100%; height: 25px; overflow: visible; shape-rendering: crispEdges; }
.nums { font-size: 12px; text-anchor: middle; }

/* command panel */
.panel { min-height: 0; display: flex; flex-direction: column; padding: 4px 6px 4px 5px; }
.tabs { flex: none; display: flex; height: 25px; border-bottom: 1px solid #eee; }
.tabs button { width: 29px; display: grid; place-items: center; border: 1px solid #eee; border-right-color: #777; border-bottom: 0; }
.tabs .current { border-color: #f4f4f4; }
.tabs svg { width: 20px; height: 20px; }
.cats { flex: none; display: flex; height: 24px; margin: 7px 0 6px 4px; }
.cats button { width: 24px; display: grid; place-items: center; }
.cats .on { background: #f4c430; border: 1px solid #777; }
.cats svg { width: 18px; height: 18px; }
.kind { flex: none; width: 142px; margin-left: 16px; }
.rollouts { flex: 1; min-height: 0; margin-top: 8px; padding: 3px 5px 0 3px; border: 1px solid #888; box-shadow: inset 1px 1px #e8e8e8, 1px 1px #e8e8e8; }
.rollout { margin-bottom: 8px; }
.rollout h2 { position: relative; margin: 0 3px; height: 16px; border: 1px solid #000; background: #b2b2b2; font-size: 12px; font-weight: normal; line-height: 15px; text-align: center; }
.rollout h2 span { position: absolute; left: 5px; }
.rollout-body { margin-top: -8px; padding: 9px 7px 1px; border: 1px solid #888; border-top: 0; box-shadow: inset 1px 0 #e8e8e8, 0 1px #e8e8e8; }
.check { display: flex; justify-content: center; gap: 5px; height: 16px; align-items: center; margin: 1px 0 0; }
.check.start { justify-content: flex-end; gap: 2px; padding-right: 9px; margin: 0 0 2px; }
.dim { color: #808080; }
.hot { width: 105px; overflow: hidden; white-space: nowrap; background: #efc746; border: 1px solid #c8a038; border-width: 0 0 0 1px; line-height: 14px; }
.check input { appearance: none; width: 12px; height: 12px; border: 2px solid #666; border-right: 1px solid #eee; border-bottom: 1px solid #eee; background: #c5c5c5; }
.check input:checked { background: #e8e8e8; position: relative; }
.check input:checked::after { content: ""; position: absolute; left: 2px; top: 0; width: 4px; height: 6px; border: 2px solid #000; border-width: 0 2px 2px 0; transform: rotate(40deg); }
.types { display: grid; grid-template-columns: 1fr 1fr; column-gap: 8px; row-gap: 2px; }
.types button, .messages button, .keymodes button, .keysets button, .key {
  border: 1px solid #e6e6e6; border-right-color: #777; border-bottom-color: #777;
}
.types button { height: 19px; }
.name-row { display: flex; gap: 5px; height: 43px; padding: 16px 5px 7px 6px; }
.name-row input { flex: 1; min-width: 0; height: 20px; padding: 0 1px; background: #d6d6d6; border: 2px solid #555; border-right: 1px solid #eee; border-bottom: 1px solid #eee; color: #808080; }
.swatch { width: 17px; height: 20px; background: #98dfd2; border: 1px solid #bbb; }

/* status bar */
.status { flex: none; position: relative; height: 50px; display: grid; grid-template-columns: 1fr 280px 44px 53px 118px 128px 98px; border-top: 1px solid #e4e4e4; padding-top: 2px; }
.listener { display: grid; grid-template-rows: 21px 23px; gap: 2px; padding: 0 5px 0 2px; border-right: 1px solid #888; }
.listener div { border: 1px solid #555; border-right-color: #fff; border-bottom-color: #fff; }
.macro { background: #dcc2c2; }
.script { background: #fff; }
.prompt { padding-left: 4px; }
.coords { display: flex; align-items: center; height: 23px; }
.mini { width: 27px; height: 20px; display: grid; place-items: center; }
.mini svg { width: 16px; height: 16px; }
.coords label { width: 14px; }
.coords input { width: 57px; height: 21px; margin-right: 11px; }
.coords #cz { width: 46px; margin-right: 0; }
.coords input, .frame-row input { background: #e0e0e0; border: 2px solid #222; border-right: 1px solid #eee; border-bottom: 1px solid #eee; }
.messages { display: flex; height: 21px; margin-top: 2px; }
.messages output { width: 178px; padding: 2px 0 2px 4px; overflow: hidden; white-space: nowrap; border: 1px solid #777; border-right-color: #eee; border-bottom-color: #eee; }
.messages button { flex: 1; text-align: left; padding-left: 3px; }
.key { height: 45px; display: grid; place-items: center; }
.key svg { width: 26px; height: 14px; }
.keymodes { display: grid; grid-template-rows: 21px 21px; gap: 3px; padding: 0 2px; }
.keymodes button { display: flex; justify-content: center; align-items: center; overflow: hidden; }
.keysets { display: grid; grid-template-rows: 21px 20px; gap: 3px; padding: 1px 2px 0 0; }
.keysets button { text-align: left; padding-left: 6px; }
.play-row { display: grid; grid-template-columns: repeat(5, 1fr); height: 22px; }
.frame-row { display: grid; grid-template-columns: 28px 68px 1fr; height: 22px; align-items: center; }
.frame-row input { width: 68px; height: 19px; }
.playback button, .navs button { display: grid; place-items: center; }
.playback svg { width: 20px; height: 16px; }
.play-row button:nth-child(1), .play-row button:nth-child(4), .frame-row input + button { border-right: 1px solid #999; }
.navs { display: grid; grid-template: 22px 22px / repeat(4, 1fr); }
.navs svg { width: 19px; height: 19px; }
.watermark { position: absolute; left: 0; bottom: -4px; z-index: 1; width: 149px; height: 23px; padding-left: 4px; background: #fff; color: #f0102c; font: 900 17px/23px Roboto, sans-serif; }
.taskbar { flex: none; height: 4px; display: flex; justify-content: flex-end; background: #3a7be4; }
.taskbar span { width: 76px; background: #1898f0; }
```
